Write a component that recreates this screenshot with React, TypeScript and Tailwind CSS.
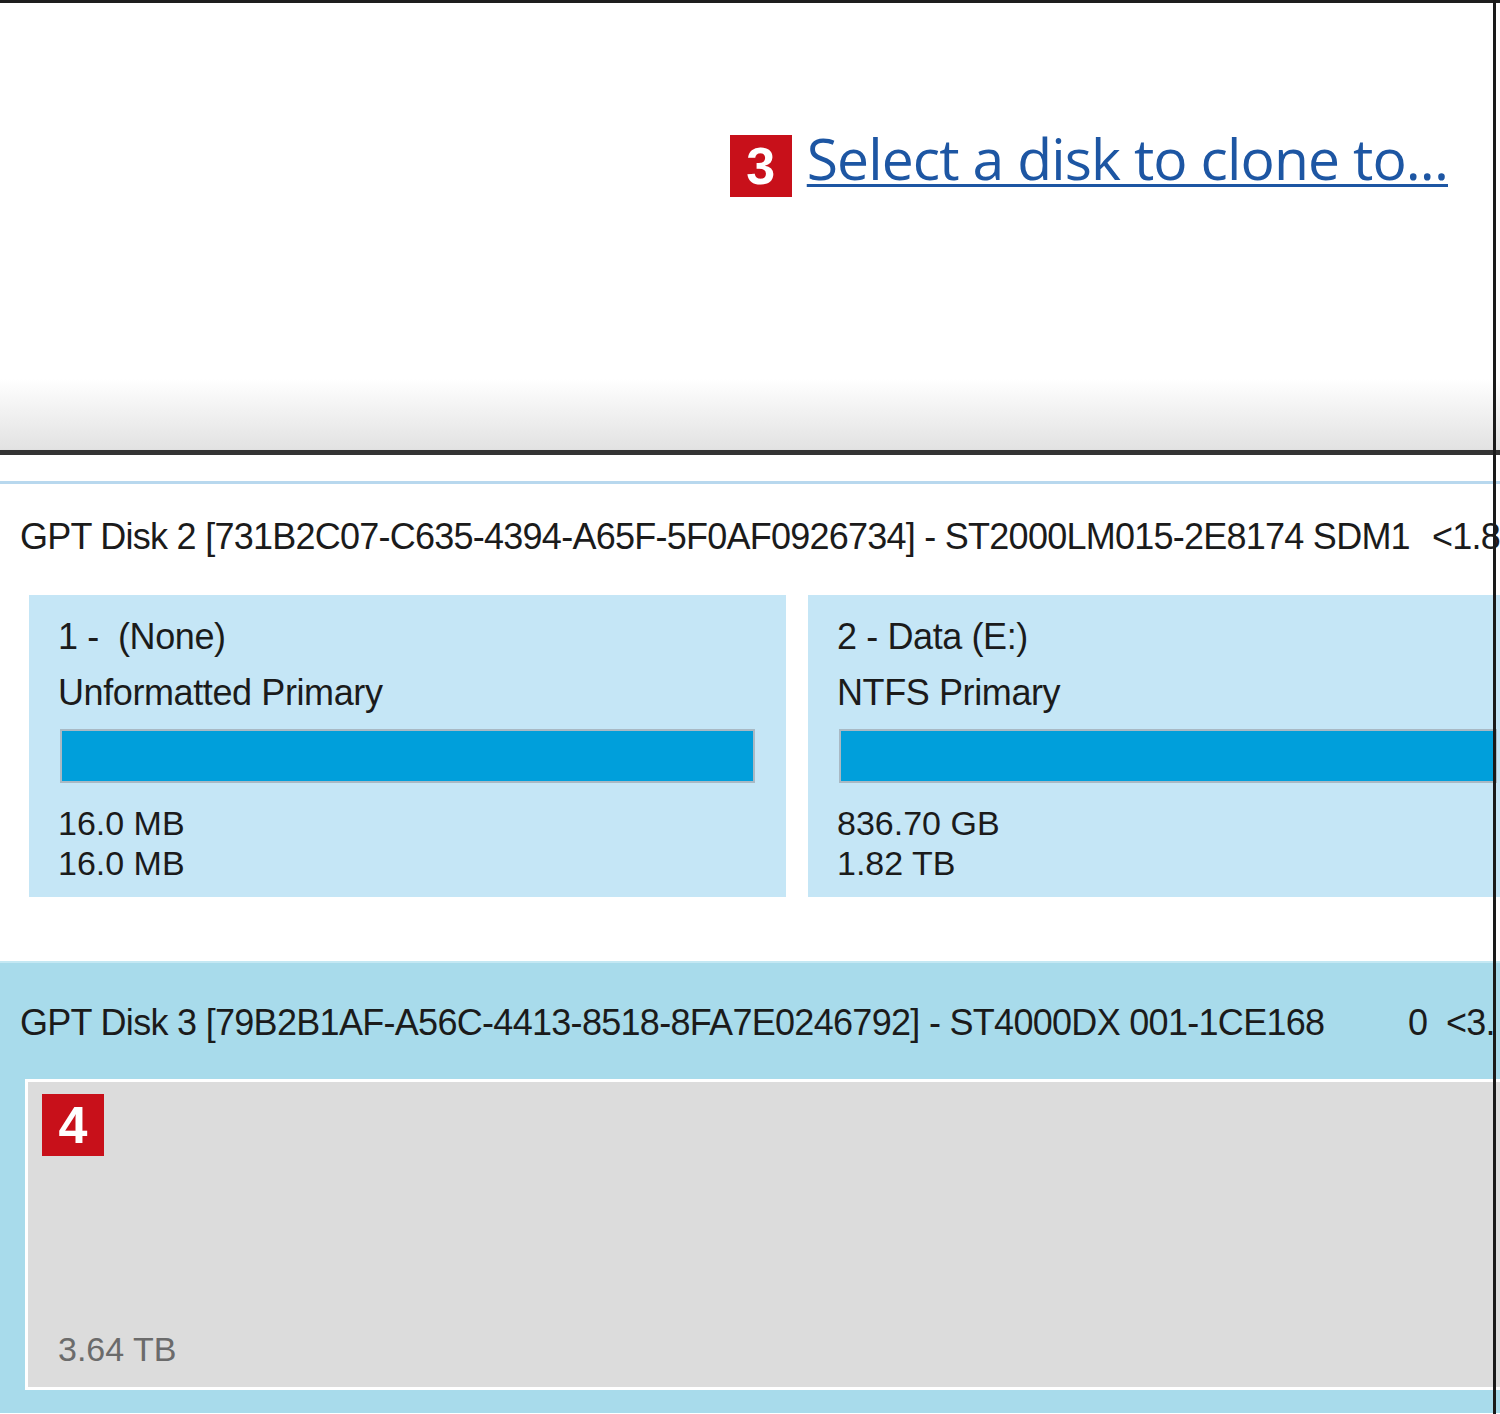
import React from "react";

const sans = { fontFamily: '"Liberation Sans", Arial, sans-serif' };

function Badge({ n }: { n: string }) {
  return (
    <div
      className="w-[62px] h-[62px] bg-[#c8101a] text-white font-bold text-[52px] leading-none flex items-center justify-center shrink-0"
      style={sans}
    >
      {n}
    </div>
  );
}

function Partition({
  title,
  type,
  a,
  b,
  className,
}: {
  title: string;
  type: string;
  a: string;
  b: string;
  className: string;
}) {
  return (
    <div className={`bg-[#c5e6f6] h-[302px] pt-[20px] pl-[29px] pr-[31px] shrink-0 ${className}`}>
      <div className="text-[36px] leading-[44px] tracking-[-0.4px] text-[#1b1b1b] whitespace-pre" style={sans}>
        {title}
      </div>
      <div className="text-[36px] leading-[44px] mt-[12px] tracking-[-0.4px] text-[#1b1b1b] whitespace-pre" style={sans}>
        {type}
      </div>
      <div className="mt-[14px] ml-[2px] h-[54px] bg-[#009fdb] border-2 border-[#a9b9c4]" />
      <div className="mt-[20px] text-[34px] leading-[40px] tracking-[0px] text-[#1b1b1b]" style={sans}>
        {a}
      </div>
      <div className="text-[34px] leading-[40px] tracking-[0px] text-[#1b1b1b]" style={sans}>
        {b}
      </div>
    </div>
  );
}

export default function App() {
  return (
    <div className="relative w-[1500px] h-[1414px] overflow-hidden bg-white">
      <div className="h-[3px] bg-[#1e1e1e]" />
      <div className="h-[447px] bg-gradient-to-b from-white from-[84%] to-[#e2e2e2] flex justify-end pt-[132px] pr-[52px]">
        <div className="flex items-start gap-[15px]">
          <Badge n="3" />
          <span
            className="text-[#1d56a3] text-[57px] leading-[58px] tracking-[-0.9px] underline decoration-[3px] underline-offset-[4px] whitespace-nowrap -mt-[6px]"
            style={{ fontFamily: '"Open Sans", "Noto Sans", sans-serif' }}
          >
            Select a disk to clone to...
          </span>
        </div>
      </div>
      <div className="h-[5px] bg-[#333] shadow-[0_2px_3px_rgba(0,0,0,0.25)]" />
      <div className="h-[26px] bg-white" />
      <div className="h-[3px] bg-[#b8d8ee]" />

      <div className="h-[477px] bg-white pt-[31px]">
        <div className="flex pl-[20px] text-[36px] leading-[44px] tracking-[-0.75px] text-[#1b1b1b] whitespace-pre" style={sans}>
          <span className="w-[1414px]">GPT Disk 2 [731B2C07-C635-4394-A65F-5F0AF0926734] - ST2000LM015-2E8174 SDM1</span>
          <span>&lt;1.8</span>
        </div>
        <div className="flex gap-[22px] mt-[36px] pl-[29px]">
          <Partition className="w-[757px]" title="1 -  (None)" type="Unformatted Primary" a="16.0 MB" b="16.0 MB" />
          <Partition className="w-[720px]" title="2 - Data (E:)" type="NTFS Primary" a="836.70 GB" b="1.82 TB" />
        </div>
      </div>

      <div className="h-[452px] bg-[#a8dbeb] border-t-2 border-[#c4e8f3] pt-[38px]">
        <div className="flex items-center pl-[20px] text-[36px] leading-[44px] tracking-[-0.7px] text-[#1b1b1b] whitespace-pre" style={sans}>
          <span className="w-[1388px]">GPT Disk 3 [79B2B1AF-A56C-4413-8518-8FA7E0246792] - ST4000DX 001-1CE168</span>
          <span>0  &lt;3.</span>
        </div>
        <div className="ml-[25px] mt-[34px] w-[1500px] h-[311px] border-[3px] border-white bg-[#dcdcdc] flex flex-col justify-between pl-[14px] pt-[12px] pb-[18px]">
          <Badge n="4" />
          <div className="pl-[16px] text-[34px] leading-[40px] tracking-[0px] text-[#6b6b6b]" style={sans}>
            3.64 TB
          </div>
        </div>
      </div>

      <div className="absolute top-0 bottom-0 left-[1493px] w-[3px] bg-[#1a1a1a]" />
    </div>
  );
}
